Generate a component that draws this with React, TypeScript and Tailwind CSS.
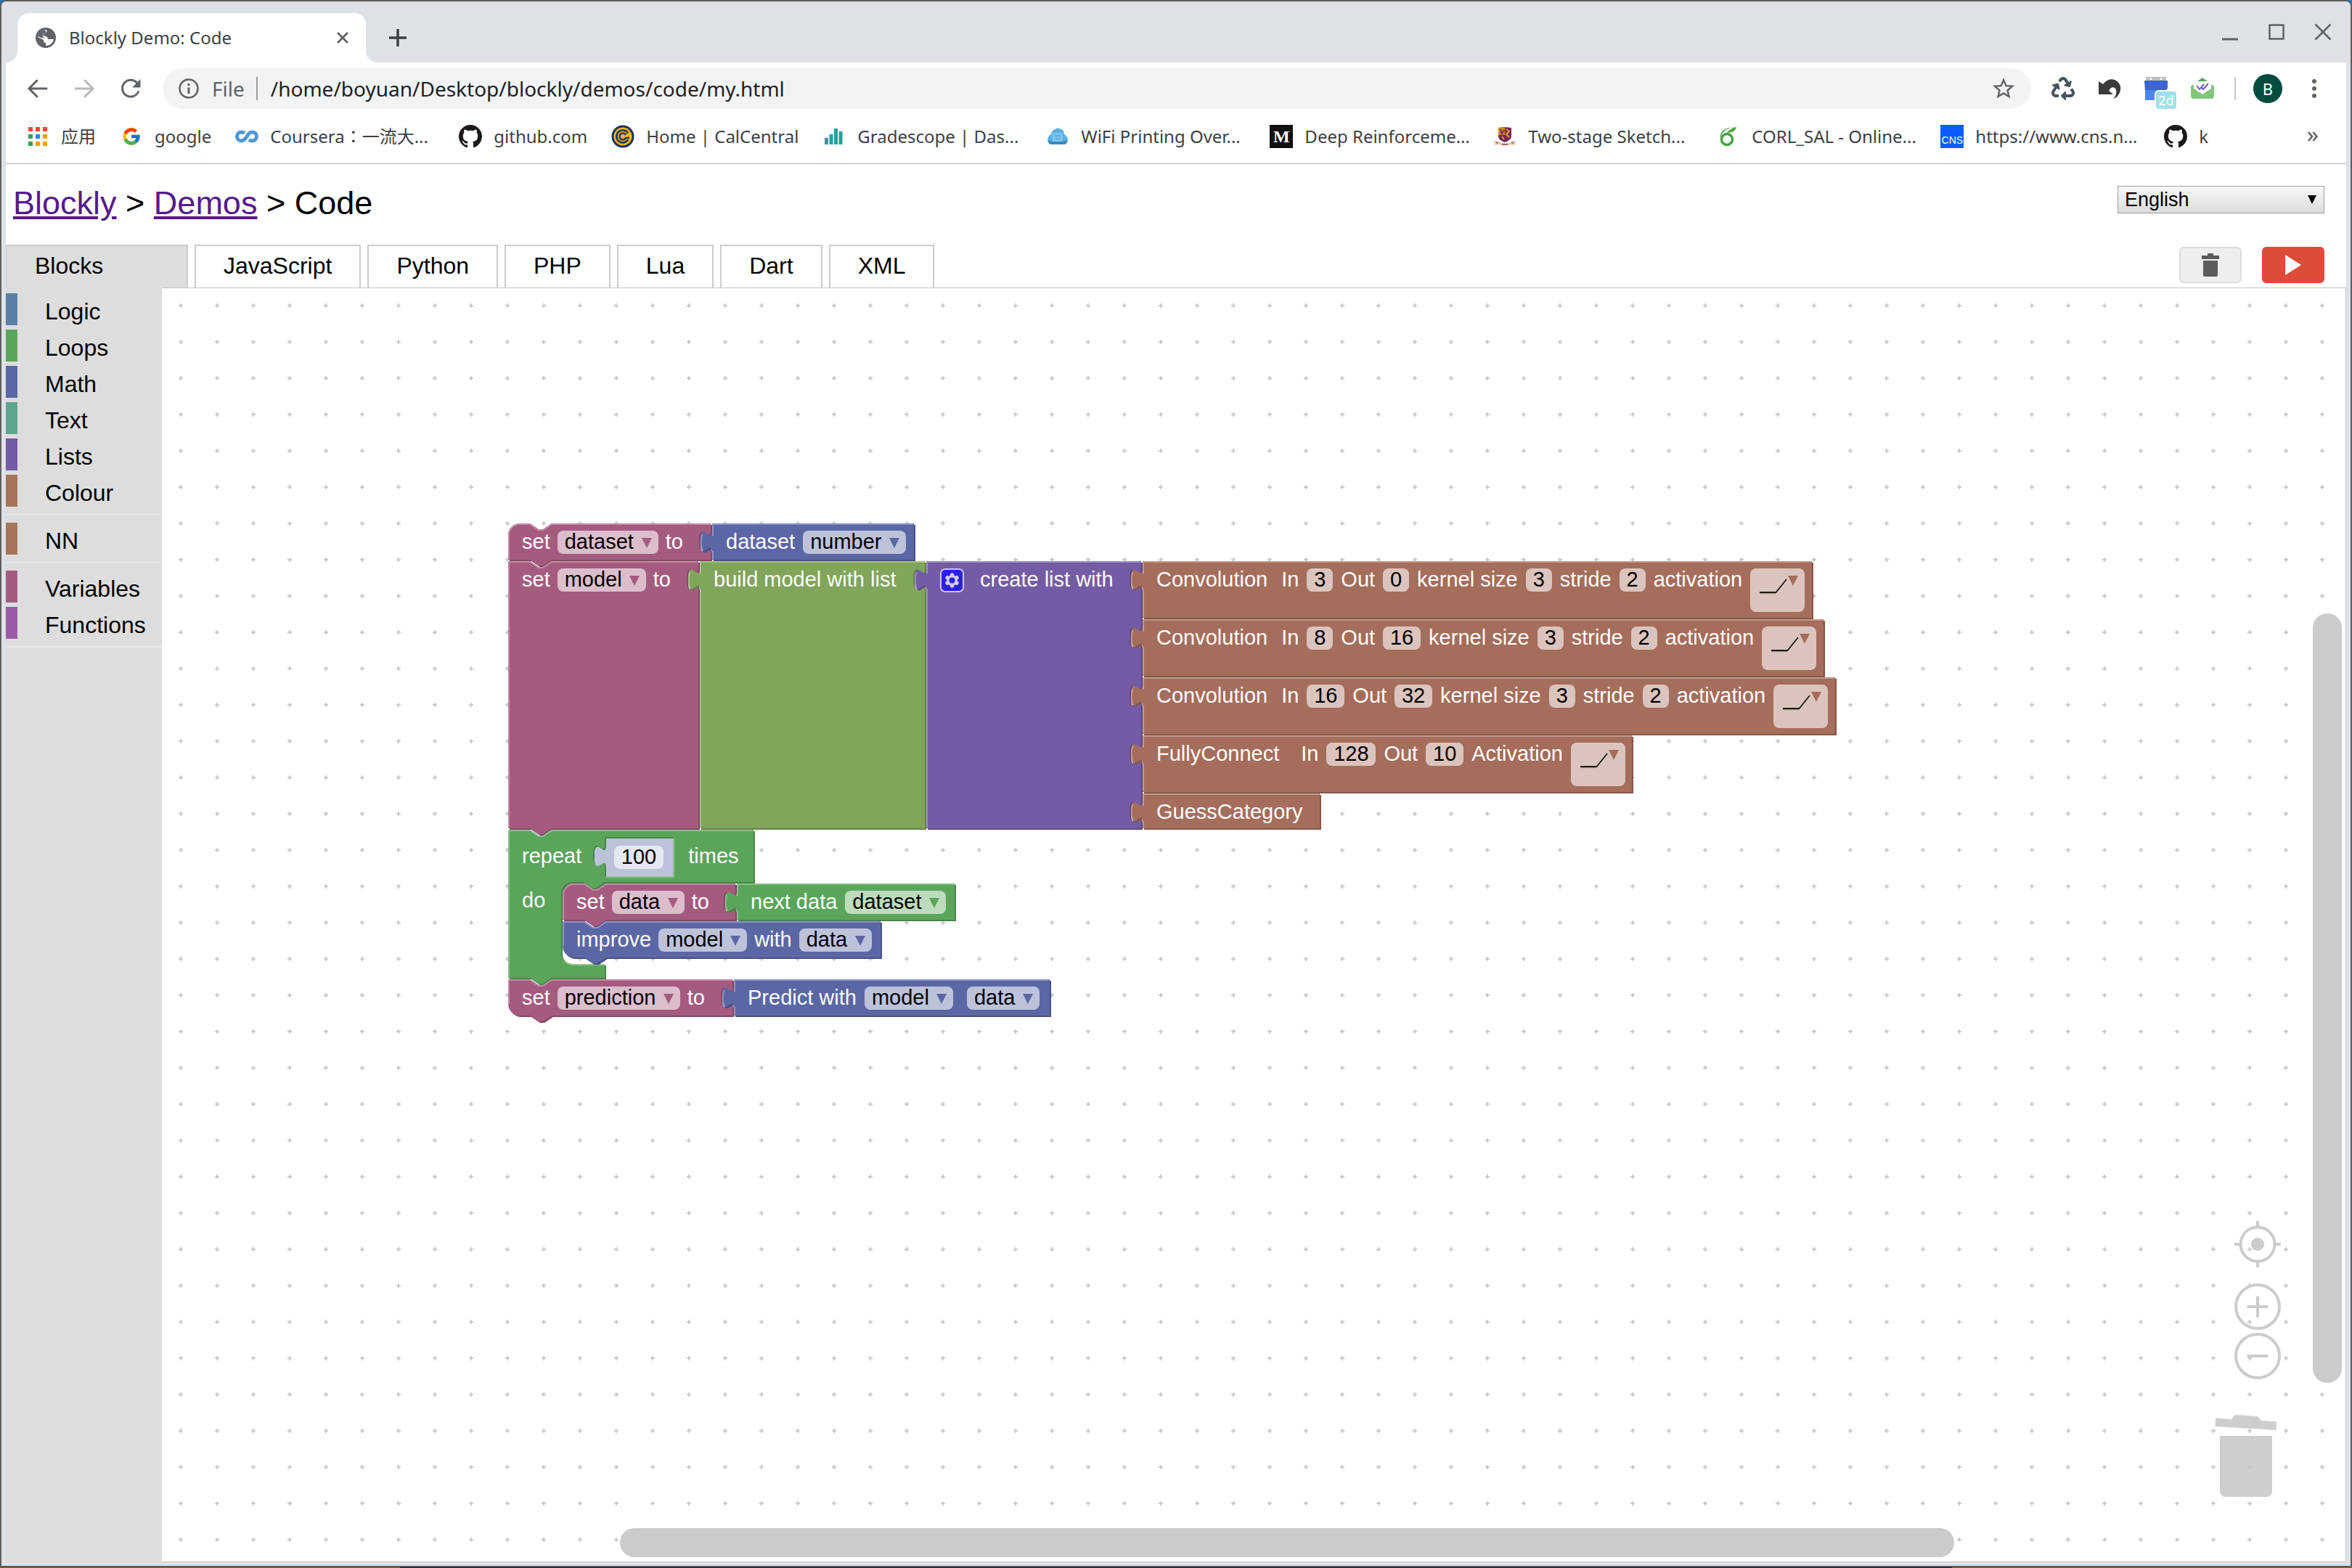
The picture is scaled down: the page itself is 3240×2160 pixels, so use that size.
import type { ReactNode } from "react";
import { FaRecycle } from "react-icons/fa";
import { FcGoogle } from "react-icons/fc";

const GITHUB =
  "M8 0C3.58 0 0 3.58 0 8c0 3.54 2.29 6.53 5.47 7.59.4.07.55-.17.55-.38 0-.19-.01-.82-.01-1.49-2.01.37-2.53-.49-2.69-.94-.09-.23-.48-.94-.82-1.13-.28-.15-.68-.52-.01-.53.63-.01 1.08.58 1.23.82.72 1.21 1.87.87 2.33.66.07-.52.28-.87.51-1.07-1.78-.2-3.64-.89-3.64-3.95 0-.87.31-1.59.82-2.15-.08-.2-.36-1.02.08-2.12 0 0 .67-.21 2.2.82.64-.18 1.32-.27 2-.27s1.36.09 2 .27c1.53-1.04 2.2-.82 2.2-.82.44 1.1.16 1.92.08 2.12.51.56.82 1.27.82 2.15 0 3.07-1.87 3.75-3.65 3.95.29.25.54.73.54 1.48 0 1.07-.01 1.93-.01 2.2 0 .21.15.46.55.38A8.01 8.01 0 0 0 16 8c0-4.42-3.58-8-8-8z";

function GithubMark() {
  return (
    <svg viewBox="0 0 16 16" className="size-8" aria-hidden="true">
      <path d={GITHUB} fill="#1b1817" />
    </svg>
  );
}

function AppsIcon() {
  const colors = ["#f44336", "#f44336", "#f44336", "#31a05a", "#1e8af5", "#f2a100", "#31a05a", "#f2a100", "#f2a100"];
  return (
    <svg viewBox="0 0 26 26" className="size-[26px]" aria-hidden="true">
      {colors.map((c, i) => (
        <rect key={i} x={(i % 3) * 10} y={Math.floor(i / 3) * 10} width="6" height="6" fill={c} />
      ))}
    </svg>
  );
}

function CourseraIcon() {
  return (
    <svg viewBox="0 0 32 32" className="size-8" aria-hidden="true">
      <path
        d="M13 11.5C11.500 10.300 10 10 8.500 10a6 6 0 0 0 0 12c4 0 5.500-3 7.500-6s3.500-6 7.500-6a6 6 0 0 1 0 12c-1.500 0-3-.3-4.500-1.500"
        fill="none"
        stroke="#4f96d6"
        strokeWidth="5"
      />
    </svg>
  );
}

function CalIcon() {
  return (
    <svg viewBox="0 0 32 32" className="size-8" aria-hidden="true">
      <circle cx="16" cy="16" r="15.500" fill="#17345f" />
      <circle cx="16" cy="16" r="12.500" fill="#fdb515" />
      <path d="M23 11.500a8.500 8.500 0 1 0 0 9" fill="none" stroke="#17345f" strokeWidth="2.500" />
      <path d="M20 14a4.500 4.500 0 1 0 0 4h5" fill="none" stroke="#17345f" strokeWidth="2.500" />
    </svg>
  );
}

function GradescopeIcon() {
  return (
    <svg viewBox="0 0 32 32" className="size-8" aria-hidden="true">
      <g fill="#22a0a0">
        <rect x="3" y="18" width="5" height="9" />
        <rect x="9.500" y="13" width="5" height="14" />
        <rect x="16" y="5" width="5" height="22" />
        <rect x="22.500" y="9" width="5" height="18" />
      </g>
    </svg>
  );
}

function PrintIcon() {
  return (
    <svg viewBox="0 0 32 32" className="size-8" aria-hidden="true">
      <path d="M7 27a6 6 0 0 1-5-6c0-4 2-6 5-8 1-4 3-7 6-7 2-2 5-2 7 0 3 0 5 3 5 7 3 2 5 4 5 8a6 6 0 0 1-5 6z" fill="#5ab0e4" />
      <path d="M3 21c3 3 23 3 26 0 0 4-2 6-5 6H8c-3 0-5-2-5-6z" fill="#3c86b8" />
      <rect x="9" y="11" width="14" height="12" rx="1" fill="#7cc4ee" />
      <path d="M12 15h8M12 19h8" stroke="#5ab0e4" strokeWidth="2" />
    </svg>
  );
}

function MediumIcon() {
  return (
    <span className="flex size-8 items-center justify-center bg-[#12100e] font-['Liberation_Serif',serif] text-[24px] leading-none font-bold text-white" aria-hidden="true">
      M
    </span>
  );
}

function CrestIcon() {
  return (
    <svg viewBox="0 0 32 32" className="size-8" aria-hidden="true">
      <path d="M7 4c5-1 13-1 18 0v11c0 5-4 7-9 9-5-2-9-4-9-9z" fill="#7b2457" />
      <path d="M7 4c3-.7 6-.8 9-.8V14H7z" fill="#c9862b" />
      <path d="M10 7l4 3-3 3M18 6l4 3-4 4 4 4M12 16l3 4" fill="none" stroke="#e0a23a" strokeWidth="2" />
      <path d="M10 6l2 6 3-5" fill="none" stroke="#7b2457" strokeWidth="2" />
      <path d="M1 21l5 2c5 3 15 3 20 0l5-2-1 7-6-1c-5 2-11 2-16 0l-6 1z" fill="#e8c9b0" />
      <path d="M4 25l3-1M12 27h8M25 24l3 1" stroke="#a86a72" strokeWidth="2" />
    </svg>
  );
}

function OverleafIcon() {
  return (
    <svg viewBox="0 0 32 32" className="size-8" aria-hidden="true">
      <circle cx="14" cy="20" r="7.500" fill="none" stroke="#47a141" strokeWidth="3.500" />
      <path d="M27 3C17 3 8 7 6 16l-1 4c-1-8 2-17 22-17z" fill="#47a141" />
      <path d="M27 3c-1 5-6 8-13 8 3-4 7-7 13-8z" fill="#47a141" />
    </svg>
  );
}

function CnsIcon() {
  return (
    <span className="flex size-8 items-end justify-center bg-[#0a5cff] font-['Liberation_Sans',sans-serif] text-[14px] leading-[22px] text-white" aria-hidden="true">
      CNS
    </span>
  );
}

function Bookmark({ icon, label, cut = false }: { icon: ReactNode; label: string; cut?: boolean }) {
  return (
    <a href="#" className="flex shrink-0 items-center gap-4">
      <span className="flex w-8 shrink-0 justify-center">{icon}</span>
      <span className={cut ? "w-[227px] whitespace-nowrap" : "whitespace-nowrap"}>{label}</span>
    </a>
  );
}

function TitleBar() {
  return (
    <header className="flex h-[84px] shrink-0 items-end pl-4">
      <div className="relative flex h-[68px] w-[480px] items-center rounded-t-2xl bg-white pr-4 pl-[25px]">
        <svg viewBox="0 0 16 16" className="absolute bottom-0 -left-4 size-4" aria-hidden="true">
          <path d="M16 0v16H0A16 16 0 0 0 16 0z" fill="#fff" />
        </svg>
        <svg viewBox="0 0 16 16" className="absolute -right-4 bottom-0 size-4" aria-hidden="true">
          <path d="M0 0v16h16A16 16 0 0 1 0 0z" fill="#fff" />
        </svg>
        <svg viewBox="0 0 28 28" className="size-7 shrink-0" aria-hidden="true">
          <circle cx="14" cy="14" r="14" fill="#5f6368" />
          <path d="M14 3c2 1 2 3 0 4s-4 1-4 3 4 1 6 3c1 1 0 3 2 3h7c-1 5-5 9-11 9v-4c-2 0-3-1-3-4l-8-4C3 8 8 3 14 3z" fill="#fff" />
          <path d="M12 3c-5 1-8 4-9 9l5 2h4c-3-3-3-5-1-6s4-1 3-3z" fill="#5f6368" />
        </svg>
        <span className="ml-[18px] flex-1 text-[24px] leading-[34px] text-[#3c4043]">Blockly Demo: Code</span>
        <button type="button" aria-label="Close tab" className="flex size-8 items-center justify-center">
          <svg viewBox="0 0 16 16" className="size-4">
            <path d="M1 1l14 14M15 1L1 15" stroke="#5f6368" strokeWidth="2.800" />
          </svg>
        </button>
      </div>
      <button type="button" aria-label="New tab" className="mb-[22px] ml-8 flex size-6 items-center justify-center">
        <svg viewBox="0 0 24 24" className="size-6">
          <path d="M12 0v24M0 12h24" stroke="#3c4043" strokeWidth="3.500" />
        </svg>
      </button>
      <div className="mr-5 mb-[30px] ml-auto flex gap-10">
        <button type="button" aria-label="Minimize">
          <svg viewBox="0 0 24 24" className="size-6">
            <path d="M1 22h22" stroke="#5f6368" strokeWidth="3" />
          </svg>
        </button>
        <button type="button" aria-label="Maximize">
          <svg viewBox="0 0 24 24" className="size-6">
            <rect x="2.500" y="2.500" width="19" height="19" fill="none" stroke="#5f6368" strokeWidth="2.500" />
          </svg>
        </button>
        <button type="button" aria-label="Close window">
          <svg viewBox="0 0 24 24" className="size-6">
            <path d="M1.500 1.500l21 21M22.500 1.500l-21 21" stroke="#5f6368" strokeWidth="2.500" />
          </svg>
        </button>
      </div>
    </header>
  );
}

function AddressBar() {
  return (
    <div className="flex h-[72px] shrink-0 items-center pr-9 pl-7">
      <div className="flex gap-8">
        <button type="button" aria-label="Back">
          <svg viewBox="0 0 32 32" className="size-8">
            <path d="M28 16H5M15 5L4 16l11 11" fill="none" stroke="#5f6368" strokeWidth="3" strokeLinecap="round" />
          </svg>
        </button>
        <button type="button" aria-label="Forward">
          <svg viewBox="0 0 32 32" className="size-8">
            <path d="M4 16h23M17 5l11 11-11 11" fill="none" stroke="#bababa" strokeWidth="3" strokeLinecap="round" />
          </svg>
        </button>
        <button type="button" aria-label="Reload">
          <svg viewBox="0 0 32 32" className="size-8">
            <path d="M26.500 20.500A11.500 11.500 0 1 1 25 8.500" fill="none" stroke="#5f6368" strokeWidth="3" strokeLinecap="round" />
            <path d="M29.500 3v11.500H18z" fill="#5f6368" />
          </svg>
        </button>
      </div>
      <div className="ml-7 flex h-14 flex-1 items-center rounded-full bg-[#f1f3f4] pr-5 pl-[22px] text-[28px]">
        <svg viewBox="0 0 28 28" className="size-7 shrink-0" aria-hidden="true">
          <circle cx="14" cy="14" r="12.500" fill="none" stroke="#5f6368" strokeWidth="2.600" />
          <path d="M14 7v3M14 12.500V21" stroke="#5f6368" strokeWidth="3" />
        </svg>
        <span className="ml-[18px] text-[#5f6368]">File</span>
        <span className="ml-4 h-8 w-0.5 bg-[#9aa0a6]" />
        <input type="text" aria-label="Address" defaultValue="/home/boyuan/Desktop/blockly/demos/code/my.html" className="ml-[18px] min-w-0 flex-1 bg-transparent text-[#202124] outline-none" />
        <button type="button" aria-label="Bookmark this page">
          <svg viewBox="0 0 24 24" className="size-9">
            <path d="M22 9.240l-7.190-.62L12 2 9.190 8.630 2 9.240l5.460 4.730L5.820 21 12 17.270 18.180 21l-1.630-7.030zM12 15.400l-3.760 2.270 1-4.280-3.320-2.880 4.380-.38L12 6.100l1.710 4.040 4.380.38-3.320 2.880 1 4.280z" fill="#5f6368" />
          </svg>
        </button>
      </div>
      <div className="ml-7 flex items-center gap-8">
        <button type="button" aria-label="Recycle">
          <FaRecycle className="size-8 text-[#46525f]" />
        </button>
        <button type="button" aria-label="Undo close tab">
          <svg viewBox="0 0 32 32" className="size-8">
            <path d="M1 6l6 4c4-5 10-8 16-6 8 3 11 13 5 21-2 3-4 4-7 5 5-4 6-12 2-15-3-2-6 0-8 4l6 5H1z" fill="#3a3a3a" />
          </svg>
        </button>
        <button type="button" aria-label="Calendar" className="relative">
          <svg viewBox="0 0 32 32" className="size-8">
            <path d="M2 0h28v6H2z" fill="#bdbdbd" />
            <path d="M0 5h32v10l-2 4v13H2l-1-12z" fill="#3c64d2" />
            <path d="M1 18h30v14H1z" fill="#4a86f4" />
            <circle cx="9" cy="2.500" r="1.500" fill="#fff" />
            <circle cx="23" cy="2.500" r="1.500" fill="#fff" />
          </svg>
          <span className="absolute top-[18px] left-3.5 box-content flex h-6 w-7 items-center justify-center rounded-md border-2 border-white bg-[#a0e1e6] text-[18px] leading-none text-white">2d</span>
        </button>
        <button type="button" aria-label="Mail tracker">
          <svg viewBox="0 0 32 32" className="size-8">
            <path d="M9 6l7-5 7 5z" fill="#4fa964" />
            <path d="M0 13l4-3h24l4 3v13a4 4 0 0 1-4 4H4a4 4 0 0 1-4-4z" fill="#80c67c" />
            <path d="M4 6h24v10l-12 8L4 16z" fill="#fff" />
            <path d="M8 12l4 5 6-7M15 15l2 2 7-8" fill="none" stroke="#6a5acd" strokeWidth="2" />
          </svg>
        </button>
      </div>
      <span className="ml-7 h-8 w-0.5 bg-[#c8cacd]" />
      <button type="button" aria-label="Profile" className="ml-6 size-10 rounded-full bg-[#004d40] text-[22px] leading-10 text-white">
        B
      </button>
      <button type="button" aria-label="Menu" className="ml-9 flex w-4 flex-col items-center gap-1">
        <span className="size-1.5 rounded-full bg-[#5f6368]" />
        <span className="size-1.5 rounded-full bg-[#5f6368]" />
        <span className="size-1.5 rounded-full bg-[#5f6368]" />
      </button>
    </div>
  );
}

function BookmarksBar() {
  return (
    <nav aria-label="Bookmarks" className="flex h-[68px] shrink-0 items-center gap-[33px] border-b border-[#b6b4b6] pr-[38px] pb-[7px] pl-7 text-[24px] text-[#3c4043]">
      <a href="#" className="flex shrink-0 items-center gap-4">
        <span className="flex w-8 shrink-0 justify-center">
          <AppsIcon />
        </span>
        <span className="whitespace-nowrap">应用</span>
      </a>
      <Bookmark icon={<FcGoogle className="size-7" />} label="google" />
      <Bookmark icon={<CourseraIcon />} label="Coursera：一流大..." cut />
      <Bookmark icon={<GithubMark />} label="github.com" />
      <Bookmark icon={<CalIcon />} label="Home | CalCentral" />
      <Bookmark icon={<GradescopeIcon />} label="Gradescope | Das..." cut />
      <Bookmark icon={<PrintIcon />} label="WiFi Printing Over..." cut />
      <Bookmark icon={<MediumIcon />} label="Deep Reinforceme..." cut />
      <Bookmark icon={<CrestIcon />} label="Two-stage Sketch..." cut />
      <Bookmark icon={<OverleafIcon />} label="CORL_SAL - Online..." cut />
      <Bookmark icon={<CnsIcon />} label="https://www.cns.n..." cut />
      <Bookmark icon={<GithubMark />} label="k" />
      <button type="button" aria-label="More bookmarks" className="ml-auto">
        <svg viewBox="0 0 16 14" className="h-3.5 w-4">
          <path d="M2 1l5 6-5 6M8.500 1l5 6-5 6" fill="none" stroke="#5f6368" strokeWidth="2.600" />
        </svg>
      </button>
    </nav>
  );
}

type Palette = { fill: string; dark: string; light: string };
const PINK: Palette = { fill: "#a55b80", dark: "#844966", light: "#c08ca6" };
const BLUE: Palette = { fill: "#5b67a5", dark: "#495284", light: "#8c95c0" };
const LIME: Palette = { fill: "#80a55b", dark: "#668449", light: "#a6c08c" };
const PURPLE: Palette = { fill: "#745ba5", dark: "#5d4984", light: "#9e8cc0" };
const BROWN: Palette = { fill: "#a56d5b", dark: "#845749", light: "#c0998c" };
const GREEN: Palette = { fill: "#5ba55b", dark: "#498449", light: "#8cc08c" };
const SHADOW: Palette = { fill: "#bdc2db", dark: "none", light: "none" };

const TAB_DOWN = "c0,20 -16,-16 -16,15 s16,-5 16,15";
const NOTCH_IN = "l12,8 6,0 12,-8";
const NOTCH_OUT = "l-12,8 -6,0 -12,-8";

function rightSide(inputs: number) {
  let d = "";
  for (let i = 0; i < inputs; i++) d += `V${10 + i * 80} ${TAB_DOWN} `;
  return d;
}

function valuePath(w: number, h: number, inputs: number) {
  return `M0,0 H${w} ${rightSide(inputs)} V${h} H0 V40 c0,-20 -16,16 -16,-15 s16,5 16,-15 z`;
}

function stackPath(w: number, h: number, inputs: number, first: boolean, last: boolean) {
  const start = first ? "M0,16 A16,16 0 0 1 16,0" : "M0,0";
  const end = last ? "H16 a16,16 0 0 1 -16,-16 z" : "H0 z";
  return `${start} H30 ${NOTCH_IN} H${w} ${rightSide(inputs)} V${h} H60 ${NOTCH_OUT} ${end}`;
}

function Shape({ path, glow, palette }: { path: string; glow: string; palette: Palette }) {
  return (
    <svg className="pointer-events-none absolute top-0 left-0 size-px overflow-visible" aria-hidden="true">
      <path d={path} fill={palette.dark} fillRule="evenodd" transform="translate(2,2)" />
      <path d={path} fill={palette.fill} fillRule="evenodd" />
      <path d={glow} fill="none" stroke={palette.light} strokeWidth="2" />
    </svg>
  );
}

type BlockProps = {
  palette: Palette;
  at: string;
  w: number;
  h?: number;
  inputs?: number;
  first?: boolean;
  last?: boolean;
  children: ReactNode;
};

function ValueBlock({ palette, at, w, h = 50, inputs = 0, children }: BlockProps) {
  const glow = `M1,${h - 1} V38 m-14.720,-1 q-3.040,-11 0,-22 m14.720,2 V1 H${w - 1}`;
  return (
    <div className={`absolute ${at}`}>
      <Shape path={valuePath(w, h, inputs)} glow={glow} palette={palette} />
      <div className="relative flex items-start gap-[11px] pt-2.5 pl-[19px]">{children}</div>
    </div>
  );
}

function StackBlock({ palette, at, w, h = 50, inputs = 0, first = false, last = false, children }: BlockProps) {
  const foot = last ? h - 16 : h - 1;
  const head = first ? "V16 A15,15 0 0 1 16,1" : "V1";
  const glow = `M1,${foot} ${head} H30 ${NOTCH_IN} H${w - 1}`;
  return (
    <div className={`absolute ${at}`}>
      <Shape path={stackPath(w, h, inputs, first, last)} glow={glow} palette={palette} />
      <div className="relative flex items-start gap-2.5 pt-2.5 pl-[19px]">{children}</div>
    </div>
  );
}

function Label({ children }: { children: ReactNode }) {
  return <span className="text-[29px] leading-[30px] whitespace-nowrap text-white">{children}</span>;
}

function Num({ value, width, label }: { value: string; width: string; label: string }) {
  return (
    <input
      type="text"
      aria-label={label}
      defaultValue={value}
      className={`h-8 rounded-lg bg-white/60 pb-0.5 text-center text-[29px] leading-[30px] text-black outline-none ${width}`}
    />
  );
}

function Drop({ value, label, arrow }: { value: string; label: string; arrow: string }) {
  return (
    <span className="relative flex h-8">
      <select aria-label={label} className="h-8 appearance-none rounded-lg bg-white/60 pr-[33px] pb-0.5 pl-2.5 text-[29px] leading-[30px] text-black outline-none">
        <option>{value}</option>
      </select>
      <svg viewBox="0 0 14 14" className="pointer-events-none absolute top-2.5 right-[9px] size-3.5" aria-hidden="true">
        <path d="M0 0h14L7 14z" fill={arrow} />
      </svg>
    </span>
  );
}

function ActivationDrop() {
  return (
    <button type="button" aria-label="Activation function" className="h-[60px] w-[75px] rounded-lg bg-white/60">
      <svg viewBox="0 0 75 60" className="h-[60px] w-[75px]">
        <path d="M13 34.500h22" stroke="#a09a7c" strokeWidth="1.500" />
        <path d="M13 33h22.500L50 15" fill="none" stroke="#1a1a1a" strokeWidth="1.800" />
        <path d="M52 10h14l-7 14z" fill="#a56d5b" />
      </svg>
    </button>
  );
}

function ConvolutionBlock({ at, w, size, values }: { at: string; w: number; size: [string, string]; values: [string, string, string, string] }) {
  return (
    <ValueBlock palette={BROWN} at={at} w={w} h={78}>
      <span className="mr-2 flex">
        <Label>Convolution</Label>
      </span>
      <Label>In</Label>
      <Num label="In" value={values[0]} width={size[0]} />
      <Label>Out</Label>
      <Num label="Out" value={values[1]} width={size[1]} />
      <Label>kernel size</Label>
      <Num label="Kernel size" value={values[2]} width="w-9" />
      <Label>stride</Label>
      <Num label="Stride" value={values[3]} width="w-9" />
      <Label>activation</Label>
      <ActivationDrop />
    </ValueBlock>
  );
}

const REPEAT_PATH =
  `M0,0 H30 ${NOTCH_IN} H338 V72 H133 ${NOTCH_OUT} h-14 a16,16 0 0 0 -16,16 V169 a16,16 0 0 0 16,16 H133 V204 H60 ${NOTCH_OUT} H0 z ` +
  `M133,10 V20 ${TAB_DOWN} V66 H229 V10 z`;
const REPEAT_GLOW = `M1,203 V1 H30 ${NOTCH_IN} H337 M78,181 A16,16 0 0 0 89,186 H132 M228,11 V65 H134`;

function Program() {
  return (
    <div className="absolute top-[324px] left-[477px]">
      <StackBlock palette={PINK} at="left-0 top-0" w={279} inputs={1} first>
        <Label>set</Label>
        <Drop label="Variable" value="dataset" arrow="#a55b80" />
        <Label>to</Label>
      </StackBlock>
      <ValueBlock palette={BLUE} at="left-[281px] top-0" w={278}>
        <Label>dataset</Label>
        <Drop label="Dataset" value="number" arrow="#5b67a5" />
      </ValueBlock>

      <StackBlock palette={PINK} at="left-0 top-[52px]" w={262} h={368} inputs={1}>
        <Label>set</Label>
        <Drop label="Variable" value="model" arrow="#a55b80" />
        <Label>to</Label>
      </StackBlock>
      <ValueBlock palette={LIME} at="left-[264px] top-[52px]" w={310} h={368} inputs={1}>
        <Label>build model with list</Label>
      </ValueBlock>
      <ValueBlock palette={PURPLE} at="left-[576px] top-[52px]" w={296} h={368} inputs={5}>
        <button type="button" aria-label="Edit list" className="mr-2.5 size-[34px]">
          <svg viewBox="0 0 34 34" className="size-[34px]">
            <rect x="1" y="1" width="31" height="31" rx="6" fill="#2a20e0" stroke="#cfc6e4" strokeWidth="2" />
            <g fill="#d3cdf5">
              <circle cx="16.500" cy="16.500" r="7.500" />
              {[0, 60, 120].map((a) => (
                <rect key={a} x="14" y="6.500" width="5" height="20" rx="1.500" transform={`rotate(${a} 16.5 16.5)`} />
              ))}
            </g>
            <circle cx="16.500" cy="16.500" r="4" fill="#2a20e0" />
          </svg>
        </button>
        <Label>create list with</Label>
      </ValueBlock>
      <ConvolutionBlock at="left-[874px] top-[52px]" w={922} size={["w-9", "w-9"]} values={["3", "0", "3", "2"]} />
      <ConvolutionBlock at="left-[874px] top-[132px]" w={938} size={["w-9", "w-[52px]"]} values={["8", "16", "3", "2"]} />
      <ConvolutionBlock at="left-[874px] top-[212px]" w={954} size={["w-[52px]", "w-[52px]"]} values={["16", "32", "3", "2"]} />
      <ValueBlock palette={BROWN} at="left-[874px] top-[292px]" w={674} h={78}>
        <span className="mr-[19px] flex">
          <Label>FullyConnect</Label>
        </span>
        <Label>In</Label>
        <Num label="In" value="128" width="w-[68px]" />
        <Label>Out</Label>
        <Num label="Out" value="10" width="w-[52px]" />
        <Label>Activation</Label>
        <ActivationDrop />
      </ValueBlock>
      <ValueBlock palette={BROWN} at="left-[874px] top-[372px]" w={244} h={48}>
        <Label>GuessCategory</Label>
      </ValueBlock>

      <div className="absolute top-[422px] left-0">
        <Shape path={REPEAT_PATH} glow={REPEAT_GLOW} palette={GREEN} />
        <div className="relative flex pt-[21px] pl-[19px]">
          <Label>repeat</Label>
          <span className="ml-[147px] flex">
            <Label>times</Label>
          </span>
        </div>
        <div className="relative flex pt-[31px] pl-[19px]">
          <Label>do</Label>
        </div>
      </div>
      <div className="absolute top-[434px] left-[135px]">
        <Shape path={valuePath(92, 52, 0)} glow="" palette={SHADOW} />
        <div className="relative flex pt-2.5 pl-[11px]">
          <Num label="Repeat count" value="100" width="w-[68px]" />
        </div>
      </div>

      <StackBlock palette={PINK} at="left-[75px] top-[496px]" w={238} inputs={1} first>
        <Label>set</Label>
        <Drop label="Variable" value="data" arrow="#a55b80" />
        <Label>to</Label>
      </StackBlock>
      <ValueBlock palette={GREEN} at="left-[315px] top-[496px]" w={300}>
        <Label>next data</Label>
        <Drop label="Dataset variable" value="dataset" arrow="#5ba55b" />
      </ValueBlock>
      <StackBlock palette={BLUE} at="left-[75px] top-[548px]" w={438} last>
        <Label>improve</Label>
        <Drop label="Model variable" value="model" arrow="#5b67a5" />
        <Label>with</Label>
        <Drop label="Data variable" value="data" arrow="#5b67a5" />
      </StackBlock>

      <StackBlock palette={PINK} at="left-0 top-[628px]" w={309} inputs={1} last>
        <Label>set</Label>
        <Drop label="Variable" value="prediction" arrow="#a55b80" />
        <Label>to</Label>
      </StackBlock>
      <ValueBlock palette={BLUE} at="left-[311px] top-[628px]" w={435}>
        <Label>Predict with</Label>
        <Drop label="Model variable" value="model" arrow="#5b67a5" />
        <span className="ml-2 flex">
          <Drop label="Data variable" value="data" arrow="#5b67a5" />
        </span>
      </ValueBlock>
    </div>
  );
}

function Workspace() {
  return (
    <main className="relative flex-1 overflow-hidden border-t border-r border-b border-[#c6c6c6] bg-white">
      <svg className="absolute inset-0 size-full" aria-hidden="true">
        <defs>
          <pattern id="grid" x="1" y="-1" width="50" height="50" patternUnits="userSpaceOnUse">
            <path d="M22 25h6M25 22v6" stroke="#ccc" strokeWidth="2" />
          </pattern>
        </defs>
        <rect width="100%" height="100%" fill="url(#grid)" />
      </svg>
      <Program />
      <div className="absolute right-[89px] bottom-[251px] flex flex-col items-center">
        <button type="button" aria-label="Center workspace" className="size-16">
          <svg viewBox="0 0 64 64" className="size-16">
            <circle cx="32" cy="32" r="23.500" fill="none" stroke="#ccc" strokeWidth="4" />
            <circle cx="32" cy="32" r="9" fill="#ccc" />
            <path d="M32 0v8M32 56v8M0 32h8M56 32h8" stroke="#ccc" strokeWidth="4" />
          </svg>
        </button>
        <button type="button" aria-label="Zoom in" className="mt-[22px] size-16">
          <svg viewBox="0 0 64 64" className="size-16">
            <circle cx="32" cy="32" r="30" fill="none" stroke="#ccc" strokeWidth="4" />
            <path d="M32 17.500v29M17.500 32h29" stroke="#ccc" strokeWidth="4" />
          </svg>
        </button>
        <button type="button" aria-label="Zoom out" className="mt-1 size-16">
          <svg viewBox="0 0 64 64" className="size-16">
            <circle cx="32" cy="32" r="30" fill="none" stroke="#ccc" strokeWidth="4" />
            <path d="M17.500 32h29" stroke="#ccc" strokeWidth="4" />
          </svg>
        </button>
      </div>
      <svg viewBox="0 0 86 114" className="absolute right-[94px] bottom-[89px] h-[114px] w-[86px]" aria-label="Trash" role="img">
        <path d="M1 5.500l22 1.500 5-6 31 2 5 6 21 1.500-.5 11.500-84-5z" fill="#c6c6c6" fillOpacity=".85" />
        <path d="M7 30h72v76a8 8 0 0 1-8 8H15a8 8 0 0 1-8-8z" fill="#c6c6c6" fillOpacity=".85" />
      </svg>
      <div className="absolute top-[448px] right-[5px] h-[1060px] w-10 rounded-full bg-[#cbcbcb]" />
      <div className="absolute bottom-1.5 left-[631px] h-10 w-[1838px] rounded-full bg-[#cbcbcb]" />
    </main>
  );
}

function Category({ name, bar }: { name: string; bar: string }) {
  return (
    <button type="button" className="mb-1.5 flex h-11 w-full shrink-0 items-center text-left">
      <span className={`h-11 w-4 ${bar}`} />
      <span className="pt-1.5 pl-[38px] text-[32px] leading-9">{name}</span>
    </button>
  );
}

function Divider() {
  return <div className="mt-1 mb-2.5 h-0.5 shrink-0 bg-[#e6e6e6]" />;
}

function Toolbox() {
  return (
    <aside className="flex w-[215px] shrink-0 flex-col bg-[#ddd] pt-2 text-black">
      <Category name="Logic" bar="bg-[#5b80a5]" />
      <Category name="Loops" bar="bg-[#5ba55b]" />
      <Category name="Math" bar="bg-[#5b67a5]" />
      <Category name="Text" bar="bg-[#5ba58c]" />
      <Category name="Lists" bar="bg-[#745ba5]" />
      <Category name="Colour" bar="bg-[#a5745b]" />
      <Divider />
      <Category name="NN" bar="bg-[#a5745b]" />
      <Divider />
      <Category name="Variables" bar="bg-[#a55b80]" />
      <Category name="Functions" bar="bg-[#995ba5]" />
      <Divider />
    </aside>
  );
}

const TABS = ["JavaScript", "Python", "PHP", "Lua", "Dart", "XML"];

export default function App() {
  return (
    <div className="flex h-screen flex-col bg-[linear-gradient(90deg,#0b79c4_17%,#111_17%,#111_83%,#0b79c4_83%)] pb-px font-['Noto_Sans','Noto_Sans_CJK_JP',sans-serif]">
      <div className="flex min-h-0 flex-1 flex-col rounded-t-lg border-2 border-[#5f5d5d] bg-[#dee1e6] px-1.5 pb-[5px]">
        <TitleBar />
        <div className="flex min-h-0 flex-1 flex-col bg-white">
          <AddressBar />
          <BookmarksBar />
          <div className="flex min-h-0 flex-1 flex-col font-['Liberation_Sans',sans-serif] text-black">
            <div className="flex items-start justify-between pt-7 pr-[30px] pl-2.5">
              <h1 className="text-[45px] leading-[52px]">
                <a href="#" className="text-[#551a8b] underline">
                  Blockly
                </a>{" "}
                &gt;{" "}
                <a href="#" className="text-[#551a8b] underline">
                  Demos
                </a>{" "}
                &gt; Code
              </h1>
              <span className="relative mt-0.5 flex">
                <select aria-label="Language" className="h-[38px] w-[285px] appearance-none border border-[#a0a0a0] bg-linear-to-b from-[#f8f8f8] to-[#dcdcdc] pl-[9px] text-[27px] leading-[34px]">
                  <option>English</option>
                </select>
                <svg viewBox="0 0 12 12" className="pointer-events-none absolute top-[13px] right-[11px] size-3" aria-hidden="true">
                  <path d="M0 0h12L6 12z" fill="#000" />
                </svg>
              </span>
            </div>
            <div className="mt-[31px] flex items-end pr-[30px]">
              <div className="flex gap-[9px] text-[32px] leading-9" role="tablist">
                <button type="button" role="tab" aria-selected="true" className="h-[59px] w-[251px] border-t-2 border-r-2 border-l border-[#ccc] bg-[#ddd] pb-1 pl-[39px] text-left">
                  Blocks
                </button>
                {TABS.map((tab) => (
                  <button key={tab} type="button" role="tab" aria-selected="false" className="h-[59px] border-x-2 border-t-2 border-[#ccc] px-[38px] pb-1">
                    {tab}
                  </button>
                ))}
              </div>
              <div className="mb-1.5 ml-auto flex gap-7">
                <button type="button" aria-label="Discard all blocks" className="flex h-[50px] w-[86px] items-center justify-center rounded-md border-2 border-[#dcdcdc] bg-[#eee]">
                  <svg viewBox="0 0 26 32" className="h-8 w-[26px]">
                    <path d="M9 0h8v3h8v5H1V3h8zM3 10h20v20a2 2 0 0 1-2 2H5a2 2 0 0 1-2-2z" fill="#5c5c5c" />
                  </svg>
                </button>
                <button type="button" aria-label="Run program" className="flex h-[50px] w-[86px] items-center justify-center rounded-md bg-[#dd4b39]">
                  <svg viewBox="0 0 24 30" className="h-[30px] w-6">
                    <path d="M1 1v28l22-14z" fill="#fff" />
                  </svg>
                </button>
              </div>
            </div>
            <div className="flex min-h-0 flex-1">
              <Toolbox />
              <Workspace />
            </div>
          </div>
        </div>
      </div>
    </div>
  );
}
